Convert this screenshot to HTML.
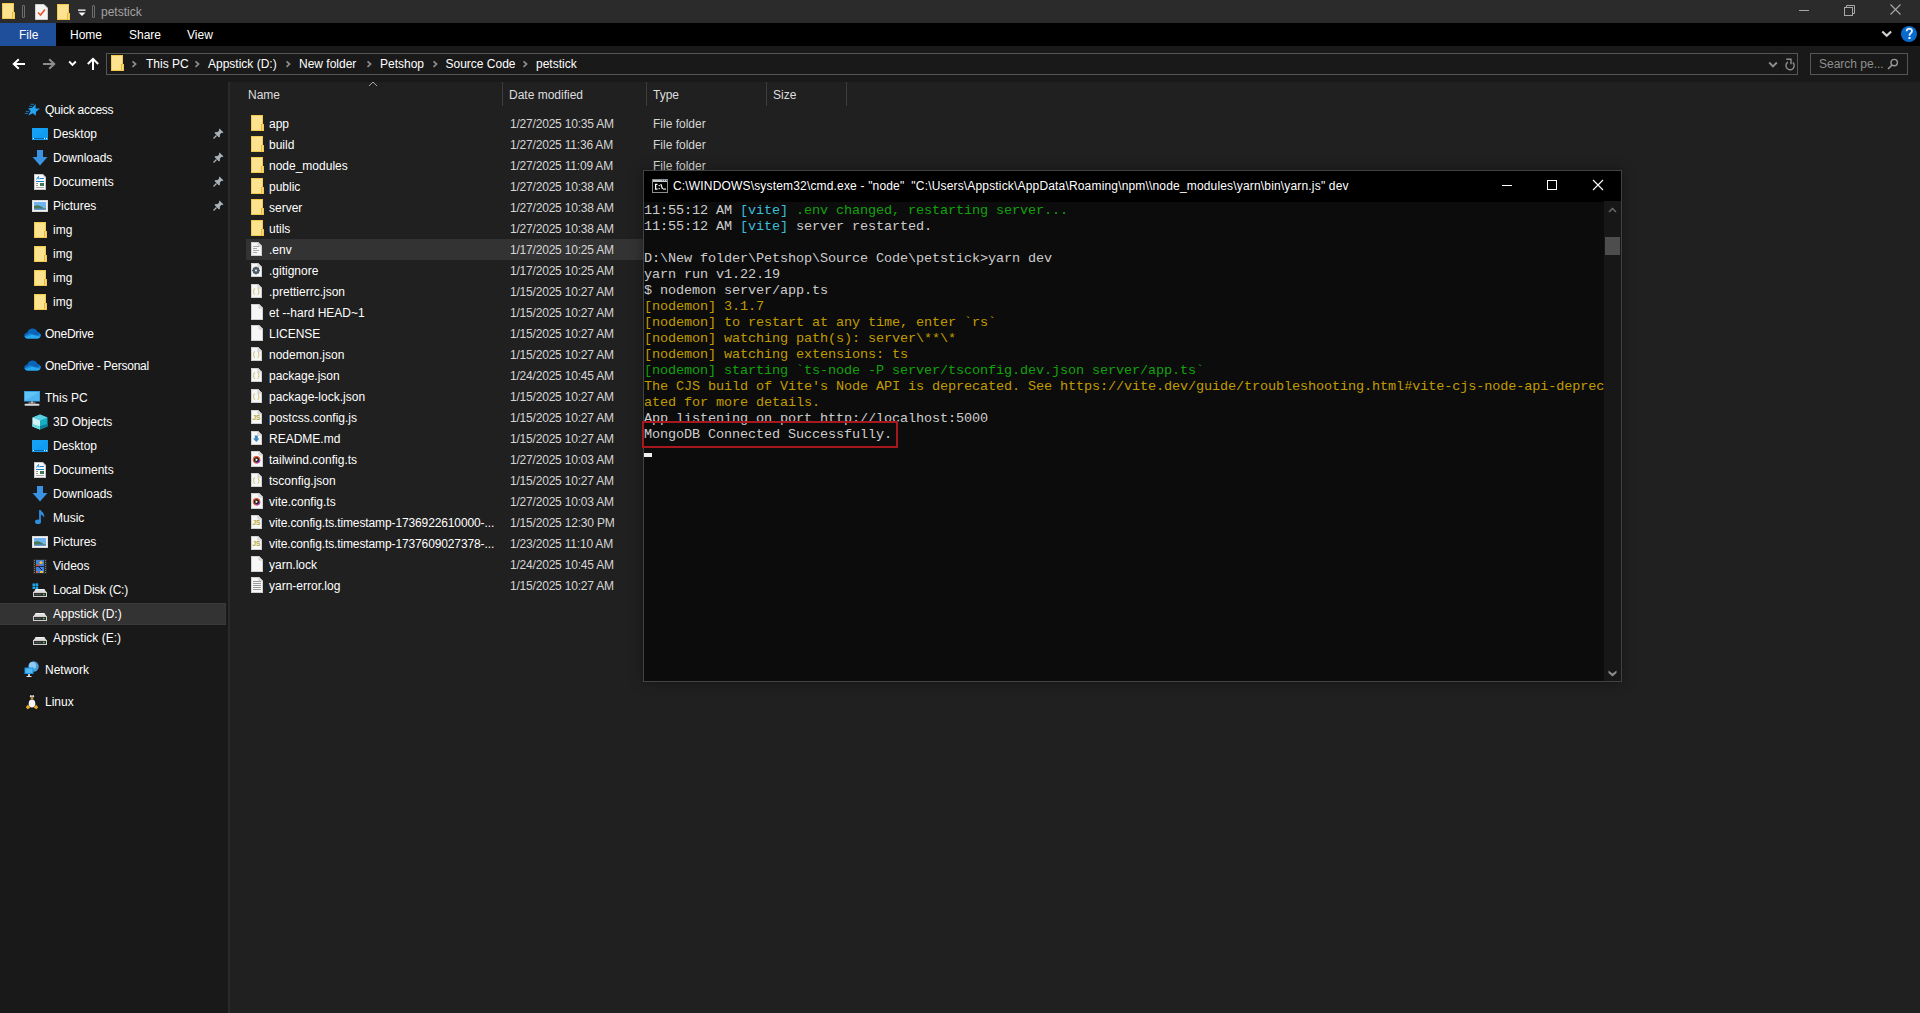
<!DOCTYPE html>
<html><head><meta charset="utf-8">
<style>
*{margin:0;padding:0;box-sizing:border-box}
html,body{width:1920px;height:1013px;overflow:hidden;background:#202020;font-family:"Liberation Sans",sans-serif;font-size:12px;color:#fff}
.a{position:absolute}
.t{position:absolute;white-space:nowrap;line-height:14px}
#title{left:0;top:0;width:1920px;height:23px;background:#2b2b2b}
#ribbon{left:0;top:23px;width:1920px;height:23px;background:#000}
#nav{left:0;top:46px;width:1920px;height:36px;background:#191919}
#side{left:0;top:82px;width:228px;height:931px;background:#191919}
#split{left:228px;top:82px;width:2px;height:931px;background:#2a2a2a}
#content{left:230px;top:82px;width:1690px;height:931px;background:#202020}
.addr{border:1px solid #555;background:#191919}
.row{position:absolute;left:246px;width:1674px;height:21px}
.nm{position:absolute;left:269px;color:#fff}
.dt{position:absolute;left:509px;color:#d4d4d4}
.ty{position:absolute;left:653px;color:#d4d4d4}
.si{position:absolute;color:#fff}
#cmd{left:643px;top:170px;width:979px;height:512px;border:1px solid #424242;background:#0c0c0c;box-shadow:0 0 12px rgba(0,0,0,.35)}
#cmdtitle{left:0;top:0;width:977px;height:31px;background:#000}
.con{position:absolute;left:0px;font-family:"Liberation Mono",monospace;font-size:13.5px;letter-spacing:-0.1px;line-height:16px;color:#cccccc;white-space:pre}
.g{color:#13a10e}.y{color:#c19c00}.c{color:#3bbfdc}.w{color:#f2f2f2}
</style></head><body>
<div id="title" class="a">
<svg class="a" style="left:2px;top:3px" width="14" height="16" viewBox="0 0 14 16"><rect x="0" y="0" width="12" height="16" fill="#f3c94c"/><rect x="1" y="1" width="10" height="14" fill="#fde290"/><rect x="10" y="9" width="3" height="7" fill="#f3c94c"/><rect x="11" y="10" width="1" height="5" fill="#fbdc7e"/><rect x="10" y="9" width="1" height="6" fill="#e3b848"/></svg>
<div class="a" style="left:22px;top:5px;width:3px;height:13px;border:1px solid #6e6e6e;border-radius:1px"></div>
<svg class="a" style="left:35px;top:4px" width="13" height="16" viewBox="0 0 13 16"><path d="M0.5 0.5H9L12.5 4V15.5H0.5Z" fill="#f4f4f4" stroke="#cfcfcf"/><path d="M3 8.5L5.5 11L10 5.5" stroke="#e8542a" stroke-width="1.6" fill="none"/></svg>
<svg class="a" style="left:57px;top:4px" width="14" height="16" viewBox="0 0 14 16"><rect x="0" y="0" width="12" height="16" fill="#f3c94c"/><rect x="1" y="1" width="10" height="14" fill="#fde290"/><rect x="10" y="9" width="3" height="7" fill="#f3c94c"/><rect x="11" y="10" width="1" height="5" fill="#fbdc7e"/><rect x="10" y="9" width="1" height="6" fill="#e3b848"/></svg>
<svg class="a" style="left:78px;top:9px" width="8" height="8" viewBox="0 0 8 8"><rect x="0" y="0.5" width="7.5" height="1.3" fill="#fff"/><path d="M0.5 3.5H7.5L4 7Z" fill="#fff"/></svg>
<div class="a" style="left:92px;top:5px;width:3px;height:13px;border:1px solid #6e6e6e;border-radius:1px"></div>
<div class="t" style="left:101px;top:5px;color:#a3a3a3;font-size:12px">petstick</div>
<div class="a" style="left:1799px;top:10px;width:10px;height:1px;background:#a8a8a8"></div>
<svg class="a" style="left:1843px;top:4px" width="13" height="13" viewBox="0 0 13 13"><rect x="1.5" y="3.5" width="8" height="8" fill="none" stroke="#a8a8a8"/><path d="M3.5 3.5V1.5H11.5V9.5H9.5" fill="none" stroke="#a8a8a8"/></svg>
<svg class="a" style="left:1889.5px;top:4px" width="11" height="11" viewBox="0 0 11 11"><path d="M0.5 0.5L10.5 10.5M10.5 0.5L0.5 10.5" stroke="#a8a8a8" stroke-width="1.1"/></svg>
</div>
<div id="ribbon" class="a">
<div class="a" style="left:0;top:0;width:56px;height:23px;background:#1f4e9b"></div>
<div class="t" style="left:19px;top:5px">File</div>
<div class="t" style="left:70px;top:5px">Home</div>
<div class="t" style="left:129px;top:5px">Share</div>
<div class="t" style="left:187px;top:5px">View</div>
<svg class="a" style="left:1881px;top:7px" width="12" height="9" viewBox="0 0 12 9"><path d="M1.3 1.5L5.7 5.8L10.1 1.5" stroke="#d2d2d2" stroke-width="2.2" fill="none"/></svg>
<svg class="a" style="left:1900px;top:2px" width="18" height="18" viewBox="0 0 18 18"><circle cx="9" cy="9" r="8" fill="#0a6bcd"/><path d="M6.6 6.2Q6.8 3.6 9.4 3.6Q12 3.7 12 6Q12 7.4 10.4 8.5Q9.5 9.2 9.5 10.8" stroke="#e8f0fa" stroke-width="1.8" fill="none"/><rect x="8.5" y="12" width="2" height="2" fill="#fff"/></svg>
</div>
<div id="nav" class="a">
<svg class="a" style="left:12px;top:12px" width="14" height="12" viewBox="0 0 14 12"><path d="M13 6H2M6.8 1.2L1.8 6L6.8 10.8" stroke="#fff" stroke-width="2" fill="none"/></svg>
<svg class="a" style="left:42px;top:12px" width="14" height="12" viewBox="0 0 14 12"><path d="M1 6H12M7.2 1.2L12.2 6L7.2 10.8" stroke="#8e8e8e" stroke-width="2" fill="none"/></svg>
<svg class="a" style="left:68px;top:14px" width="9" height="7" viewBox="0 0 9 7"><path d="M1.2 1.5L4.5 4.8L7.8 1.5" stroke="#fff" stroke-width="1.9" fill="none"/></svg>
<svg class="a" style="left:86px;top:11px" width="14" height="14" viewBox="0 0 14 14"><path d="M7 13V2M1.8 7L7 1.8L12.2 7" stroke="#fff" stroke-width="2" fill="none"/></svg>
<div class="a addr" style="left:106px;top:7px;width:1692px;height:22px"></div>
<svg class="a" style="left:111px;top:9px" width="14" height="16" viewBox="0 0 14 16"><rect x="0" y="0" width="12" height="16" fill="#f3c94c"/><rect x="1" y="1" width="10" height="14" fill="#fde290"/><rect x="10" y="9" width="3" height="7" fill="#f3c94c"/><rect x="11" y="10" width="1" height="5" fill="#fbdc7e"/><rect x="10" y="9" width="1" height="6" fill="#e3b848"/></svg>
<svg class="a" style="left:131.4px;top:14px" width="7" height="9" viewBox="0 0 7 9"><path d="M1.5 1.3L4.6 4.1L1.5 6.9" stroke="#8c8c8c" stroke-width="1.7" fill="none"/></svg>
<svg class="a" style="left:193.9px;top:14px" width="7" height="9" viewBox="0 0 7 9"><path d="M1.5 1.3L4.6 4.1L1.5 6.9" stroke="#8c8c8c" stroke-width="1.7" fill="none"/></svg>
<svg class="a" style="left:284.9px;top:14px" width="7" height="9" viewBox="0 0 7 9"><path d="M1.5 1.3L4.6 4.1L1.5 6.9" stroke="#8c8c8c" stroke-width="1.7" fill="none"/></svg>
<svg class="a" style="left:365.9px;top:14px" width="7" height="9" viewBox="0 0 7 9"><path d="M1.5 1.3L4.6 4.1L1.5 6.9" stroke="#8c8c8c" stroke-width="1.7" fill="none"/></svg>
<svg class="a" style="left:431.9px;top:14px" width="7" height="9" viewBox="0 0 7 9"><path d="M1.5 1.3L4.6 4.1L1.5 6.9" stroke="#8c8c8c" stroke-width="1.7" fill="none"/></svg>
<svg class="a" style="left:522.4px;top:14px" width="7" height="9" viewBox="0 0 7 9"><path d="M1.5 1.3L4.6 4.1L1.5 6.9" stroke="#8c8c8c" stroke-width="1.7" fill="none"/></svg>
<div class="t" style="left:146px;top:11px">This PC</div>
<div class="t" style="left:208px;top:11px">Appstick (D:)</div>
<div class="t" style="left:299px;top:11px">New folder</div>
<div class="t" style="left:380px;top:11px">Petshop</div>
<div class="t" style="left:445.5px;top:11px">Source Code</div>
<div class="t" style="left:536px;top:11px">petstick</div>
<div class="a" style="left:1780px;top:8px;width:1px;height:20px;background:#151515"></div>
<svg class="a" style="left:1768px;top:15px" width="10" height="8" viewBox="0 0 10 8"><path d="M1.2 1.5L5 5.3L8.8 1.5" stroke="#8e8e8e" stroke-width="1.9" fill="none"/></svg>
<svg class="a" style="left:1784px;top:11px" width="13" height="15" viewBox="0 0 13 15"><path d="M8.8 5.6A4.1 4.1 0 1 1 3.9 5.2" stroke="#8e8e8e" stroke-width="1.4" fill="none"/><path d="M2.3 2.3H7V7.2" stroke="#8e8e8e" stroke-width="1.4" fill="none"/></svg>
<div class="a addr" style="left:1810px;top:7px;width:98px;height:22px"></div>
<div class="t" style="left:1819px;top:11px;color:#8f8f8f">Search pe...</div>
<svg class="a" style="left:1887px;top:12px" width="12" height="12" viewBox="0 0 12 12"><circle cx="7.2" cy="4.6" r="3.2" stroke="#9a9a9a" stroke-width="1.4" fill="none"/><path d="M5 7L1 11" stroke="#9a9a9a" stroke-width="1.6"/></svg>
</div>
<div id="side" class="a">
<div class="a" style="left:0px;top:521px;width:226px;height:22px;background:#333;border:1px solid #393939;border-left:0"></div>
<svg class="a" style="left:20px;top:18px" width="24" height="20" viewBox="0 0 24 20"><path d="M15.60 3.90L15.56 8.42L19.90 8.50L16.11 11.72L15.60 15.80L12.90 13.30L8.30 15.60L10.67 11.08L8.10 8.50L12.22 7.86Z" fill="#20a4f3"/><path d="M11 4.3H13.6M9.5 6.4H12M6.2 11.4H8.6M5.2 13.4H7.6" stroke="#1677b8" stroke-width="1" stroke-linecap="round"/></svg>
<div class="t" style="left:45px;top:21px;letter-spacing:-0.25px">Quick access</div>
<svg class="a" style="left:32px;top:46px" width="16" height="12" viewBox="0 0 16 12"><rect x="0" y="0" width="16" height="12" fill="#14a0f5"/><path d="M0 12L16 0V10H0Z" fill="#0d97ec" opacity="0.5"/><rect x="1" y="10" width="14" height="1" fill="#0a64b0"/><rect x="1" y="10" width="1" height="1" fill="#fff"/><rect x="12" y="10" width="1" height="1" fill="#fff"/><rect x="14" y="10" width="1" height="1" fill="#fff"/></svg>
<div class="t" style="left:53px;top:45px">Desktop</div>
<svg class="a" style="left:32px;top:68px" width="16" height="16" viewBox="0 0 16 16"><path d="M5 0H11V7H15.5L8 15.5L0.5 7H5Z" fill="#3a93e3"/></svg>
<div class="t" style="left:53px;top:69px">Downloads</div>
<svg class="a" style="left:34px;top:92px" width="12" height="16" viewBox="0 0 12 16"><path d="M0 0H9L12 3V16H0Z" fill="#c8c8c8"/><path d="M1 1H8.5L11 3.5V15H1Z" fill="#fafafa"/><rect x="2" y="7" width="8" height="1" fill="#1683d8"/><path d="M2.5 5.5L4.5 2.5L5 5.5" stroke="#1683d8" stroke-width="1" fill="none"/><rect x="6" y="4" width="4" height="1" fill="#1683d8"/><rect x="2" y="9" width="2" height="1" fill="#999"/><rect x="2" y="11" width="2" height="1" fill="#999"/><rect x="6" y="9" width="4" height="3" fill="#3d7a4f"/><rect x="2" y="13" width="8" height="1" fill="#aaa"/></svg>
<div class="t" style="left:53px;top:93px">Documents</div>
<svg class="a" style="left:32px;top:118px" width="16" height="12" viewBox="0 0 16 12"><rect x="0" y="0" width="16" height="12" fill="#d9d9d9"/><rect x="1" y="1" width="14" height="10" fill="#f4f4f4"/><rect x="2" y="2" width="12" height="8" fill="#6fb4f0"/><path d="M2 6Q6 4 10 7T14 7V10H2Z" fill="#477a55"/><rect x="2" y="8.5" width="12" height="1.5" fill="#5f95c9"/></svg>
<div class="t" style="left:53px;top:117px">Pictures</div>
<svg class="a" style="left:34px;top:140px" width="14" height="16" viewBox="0 0 14 16"><rect x="0" y="0" width="12" height="16" fill="#f3c94c"/><rect x="1" y="1" width="10" height="14" fill="#fde290"/><rect x="10" y="9" width="3" height="7" fill="#f3c94c"/><rect x="11" y="10" width="1" height="5" fill="#fbdc7e"/><rect x="10" y="9" width="1" height="6" fill="#e3b848"/></svg>
<div class="t" style="left:53px;top:141px">img</div>
<svg class="a" style="left:34px;top:164px" width="14" height="16" viewBox="0 0 14 16"><rect x="0" y="0" width="12" height="16" fill="#f3c94c"/><rect x="1" y="1" width="10" height="14" fill="#fde290"/><rect x="10" y="9" width="3" height="7" fill="#f3c94c"/><rect x="11" y="10" width="1" height="5" fill="#fbdc7e"/><rect x="10" y="9" width="1" height="6" fill="#e3b848"/></svg>
<div class="t" style="left:53px;top:165px">img</div>
<svg class="a" style="left:34px;top:188px" width="14" height="16" viewBox="0 0 14 16"><rect x="0" y="0" width="12" height="16" fill="#f3c94c"/><rect x="1" y="1" width="10" height="14" fill="#fde290"/><rect x="10" y="9" width="3" height="7" fill="#f3c94c"/><rect x="11" y="10" width="1" height="5" fill="#fbdc7e"/><rect x="10" y="9" width="1" height="6" fill="#e3b848"/></svg>
<div class="t" style="left:53px;top:189px">img</div>
<svg class="a" style="left:34px;top:212px" width="14" height="16" viewBox="0 0 14 16"><rect x="0" y="0" width="12" height="16" fill="#f3c94c"/><rect x="1" y="1" width="10" height="14" fill="#fde290"/><rect x="10" y="9" width="3" height="7" fill="#f3c94c"/><rect x="11" y="10" width="1" height="5" fill="#fbdc7e"/><rect x="10" y="9" width="1" height="6" fill="#e3b848"/></svg>
<div class="t" style="left:53px;top:213px">img</div>
<svg class="a" style="left:23.5px;top:246px" width="17" height="11" viewBox="0 0 17 11"><defs><clipPath id="cl1"><path d="M4 10.5C1.9 10.5 0.3 9.2 0.3 7.4C0.3 5.7 1.6 4.5 3.4 4.4C4.1 2.1 6.2 0.5 8.7 0.5C11 0.5 12.9 1.9 13.6 3.9C15.5 4.1 16.7 5.5 16.7 7.3C16.7 9.2 15.2 10.5 13.3 10.5Z"/></clipPath></defs><g clip-path="url(#cl1)"><rect x="0" y="0" width="17" height="11" fill="#0a64b8"/><path d="M0 8.5L6 5.2L12 8L17 5.5V11H0Z" fill="#1688dc"/><path d="M0 11L0 9.5L8.5 6.5L17 9V11Z" fill="#28a8ea"/></g></svg>
<div class="t" style="left:45px;top:245px;letter-spacing:-0.25px">OneDrive</div>
<svg class="a" style="left:23.5px;top:278px" width="17" height="11" viewBox="0 0 17 11"><defs><clipPath id="cl2"><path d="M4 10.5C1.9 10.5 0.3 9.2 0.3 7.4C0.3 5.7 1.6 4.5 3.4 4.4C4.1 2.1 6.2 0.5 8.7 0.5C11 0.5 12.9 1.9 13.6 3.9C15.5 4.1 16.7 5.5 16.7 7.3C16.7 9.2 15.2 10.5 13.3 10.5Z"/></clipPath></defs><g clip-path="url(#cl2)"><rect x="0" y="0" width="17" height="11" fill="#0a64b8"/><path d="M0 8.5L6 5.2L12 8L17 5.5V11H0Z" fill="#1688dc"/><path d="M0 11L0 9.5L8.5 6.5L17 9V11Z" fill="#28a8ea"/></g></svg>
<div class="t" style="left:45px;top:277px;letter-spacing:-0.25px">OneDrive - Personal</div>
<svg class="a" style="left:24px;top:309px" width="17" height="15" viewBox="0 0 17 15"><rect x="0" y="0" width="16" height="10.5" fill="#3aa0e6"/><rect x="1" y="1" width="14" height="8.5" fill="#62c3f6"/><path d="M1 9.5L15 1V9.5Z" fill="#4fb6f2"/><rect x="7" y="10.5" width="2" height="1.5" fill="#cfcfcf"/><rect x="4.5" y="11.5" width="7" height="1" fill="#bdbdbd"/><rect x="0.5" y="12.8" width="15" height="2" rx="1" fill="#d9d9d9"/></svg>
<div class="t" style="left:45px;top:309px">This PC</div>
<svg class="a" style="left:32px;top:332px" width="16" height="16" viewBox="0 0 16 16"><path d="M8 0.5L15.5 3.5V12.5L8 15.5L0.5 12.5V3.5Z" fill="#18adc6"/><path d="M8 0.5L15.5 3.5L8 6.5L0.5 3.5Z" fill="#5ccfe0"/><path d="M0.5 3.5L8 6.5V15.5L0.5 12.5Z" fill="#d4f2f5"/><path d="M0.5 10L8 12V15.5L0.5 12.5Z" fill="#6ad6e2"/><path d="M8 12L15.5 10V12.5L8 15.5Z" fill="#0b7f98"/></svg>
<div class="t" style="left:53px;top:333px">3D Objects</div>
<svg class="a" style="left:32px;top:358px" width="16" height="12" viewBox="0 0 16 12"><rect x="0" y="0" width="16" height="12" fill="#14a0f5"/><path d="M0 12L16 0V10H0Z" fill="#0d97ec" opacity="0.5"/><rect x="1" y="10" width="14" height="1" fill="#0a64b0"/><rect x="1" y="10" width="1" height="1" fill="#fff"/><rect x="12" y="10" width="1" height="1" fill="#fff"/><rect x="14" y="10" width="1" height="1" fill="#fff"/></svg>
<div class="t" style="left:53px;top:357px">Desktop</div>
<svg class="a" style="left:34px;top:380px" width="12" height="16" viewBox="0 0 12 16"><path d="M0 0H9L12 3V16H0Z" fill="#c8c8c8"/><path d="M1 1H8.5L11 3.5V15H1Z" fill="#fafafa"/><rect x="2" y="7" width="8" height="1" fill="#1683d8"/><path d="M2.5 5.5L4.5 2.5L5 5.5" stroke="#1683d8" stroke-width="1" fill="none"/><rect x="6" y="4" width="4" height="1" fill="#1683d8"/><rect x="2" y="9" width="2" height="1" fill="#999"/><rect x="2" y="11" width="2" height="1" fill="#999"/><rect x="6" y="9" width="4" height="3" fill="#3d7a4f"/><rect x="2" y="13" width="8" height="1" fill="#aaa"/></svg>
<div class="t" style="left:53px;top:381px">Documents</div>
<svg class="a" style="left:32px;top:404px" width="16" height="16" viewBox="0 0 16 16"><path d="M5 0H11V7H15.5L8 15.5L0.5 7H5Z" fill="#3a93e3"/></svg>
<div class="t" style="left:53px;top:405px">Downloads</div>
<svg class="a" style="left:34px;top:427px" width="12" height="16" viewBox="0 0 12 16"><path d="M6 1V12" stroke="#2d8fe0" stroke-width="1.8"/><ellipse cx="4" cy="12.8" rx="3" ry="2.3" fill="#2d8fe0"/><path d="M6.5 1.5Q11 4 10 9Q9.5 6 6.5 5.5Z" fill="#2d8fe0"/></svg>
<div class="t" style="left:53px;top:429px">Music</div>
<svg class="a" style="left:32px;top:454px" width="16" height="12" viewBox="0 0 16 12"><rect x="0" y="0" width="16" height="12" fill="#d9d9d9"/><rect x="1" y="1" width="14" height="10" fill="#f4f4f4"/><rect x="2" y="2" width="12" height="8" fill="#6fb4f0"/><path d="M2 6Q6 4 10 7T14 7V10H2Z" fill="#477a55"/><rect x="2" y="8.5" width="12" height="1.5" fill="#5f95c9"/></svg>
<div class="t" style="left:53px;top:453px">Pictures</div>
<svg class="a" style="left:33px;top:477px" width="14" height="15" viewBox="0 0 14 15"><rect x="0" y="0" width="14" height="15" fill="#2a2a2a"/><rect x="1" y="1" width="1" height="1" fill="#777"/><rect x="12" y="1" width="1" height="1" fill="#777"/><rect x="1" y="3" width="1" height="1" fill="#777"/><rect x="12" y="3" width="1" height="1" fill="#777"/><rect x="1" y="5" width="1" height="1" fill="#777"/><rect x="12" y="5" width="1" height="1" fill="#777"/><rect x="1" y="7" width="1" height="1" fill="#777"/><rect x="12" y="7" width="1" height="1" fill="#777"/><rect x="1" y="9" width="1" height="1" fill="#777"/><rect x="12" y="9" width="1" height="1" fill="#777"/><rect x="1" y="11" width="1" height="1" fill="#777"/><rect x="12" y="11" width="1" height="1" fill="#777"/><rect x="1" y="13" width="1" height="1" fill="#777"/><rect x="12" y="13" width="1" height="1" fill="#777"/><rect x="3" y="1" width="8" height="6" fill="#3f7fe0"/><rect x="3" y="8" width="8" height="6" fill="#3f7fe0"/><circle cx="8" cy="3.5" r="1.6" fill="#f0c020"/><rect x="3" y="5" width="3" height="2" fill="#e04a30"/><rect x="4" y="5" width="1" height="1" fill="#30b040"/><path d="M6 8L9 11" stroke="#222" stroke-width="1"/><rect x="7" y="12" width="3" height="2" fill="#f0c020"/><rect x="3" y="12" width="2" height="2" fill="#e05a40"/></svg>
<div class="t" style="left:53px;top:477px">Videos</div>
<svg class="a" style="left:32px;top:501px" width="7" height="7" viewBox="0 0 7 7"><rect x="0.5" y="0.5" width="2.5" height="2.5" fill="#1aa7ec"/><rect x="3.5" y="0.3" width="2.7" height="2.7" fill="#1aa7ec"/><rect x="0.5" y="3.5" width="2.5" height="2.5" fill="#1aa7ec"/><rect x="3.5" y="3.5" width="2.7" height="2.7" fill="#1aa7ec"/></svg><svg class="a" style="left:33px;top:506px" width="15" height="10" viewBox="0 0 15 10"><path d="M2.8 1H11.2L13.8 4.5H0.2Z" fill="#dcdcdc"/><path d="M3 1H11L12 2.3H2Z" fill="#f2f2f2"/><rect x="0.5" y="4.5" width="13" height="4" fill="#2e2e2e" stroke="#cfcfcf"/><rect x="2" y="6.2" width="6" height="0.8" fill="#555"/><rect x="10" y="5.8" width="1.5" height="1.5" fill="#38d046"/></svg>
<div class="t" style="left:53px;top:501px;letter-spacing:-0.25px">Local Disk (C:)</div>
<svg class="a" style="left:33px;top:530px" width="15" height="10" viewBox="0 0 15 10"><path d="M2.8 1H11.2L13.8 4.5H0.2Z" fill="#dcdcdc"/><path d="M3 1H11L12 2.3H2Z" fill="#f2f2f2"/><rect x="0.5" y="4.5" width="13" height="4" fill="#2e2e2e" stroke="#cfcfcf"/><rect x="2" y="6.2" width="6" height="0.8" fill="#555"/><rect x="10" y="5.8" width="1.5" height="1.5" fill="#38d046"/></svg>
<div class="t" style="left:53px;top:525px">Appstick (D:)</div>
<svg class="a" style="left:33px;top:554px" width="15" height="10" viewBox="0 0 15 10"><path d="M2.8 1H11.2L13.8 4.5H0.2Z" fill="#dcdcdc"/><path d="M3 1H11L12 2.3H2Z" fill="#f2f2f2"/><rect x="0.5" y="4.5" width="13" height="4" fill="#2e2e2e" stroke="#cfcfcf"/><rect x="2" y="6.2" width="6" height="0.8" fill="#555"/><rect x="10" y="5.8" width="1.5" height="1.5" fill="#38d046"/></svg>
<div class="t" style="left:53px;top:549px">Appstick (E:)</div>
<svg class="a" style="left:24px;top:579px" width="17" height="17" viewBox="0 0 17 17"><circle cx="9.5" cy="5.5" r="5.2" fill="#4a9fd8"/><circle cx="8.5" cy="4.5" r="3.5" fill="#8ecaf2"/><rect x="0.5" y="6.5" width="9" height="6.5" fill="#1593e6"/><rect x="1.5" y="7.5" width="7" height="4.5" fill="#4fb8f5"/><rect x="4" y="13" width="2" height="2" fill="#ccc"/><rect x="2.5" y="15" width="5" height="1" fill="#ddd"/></svg>
<div class="t" style="left:45px;top:581px">Network</div>
<svg class="a" style="left:25px;top:611px" width="14" height="17" viewBox="0 0 14 17"><path d="M7 0.5C5 0.5 4.2 2 4.2 4C4.2 5.5 3.5 6.5 2.8 8C2 9.8 2 12 3 14H11C12 12 12 9.8 11.2 8C10.5 6.5 9.8 5.5 9.8 4C9.8 2 9 0.5 7 0.5Z" fill="#151515"/><ellipse cx="7" cy="10.5" rx="3.3" ry="4" fill="#f5f5f5"/><ellipse cx="5.9" cy="3.3" rx="1" ry="1.2" fill="#d8d8d8"/><ellipse cx="8.1" cy="3.3" rx="1" ry="1.2" fill="#d8d8d8"/><path d="M5.2 5L7 4.3L8.8 5L7 6.4Z" fill="#e9a81a"/><path d="M0.8 14.2L3 11.5L5.2 14.8L2.5 16.2Z" fill="#e9ab1c"/><path d="M13.2 14.2L11 11.5L8.8 14.8L11.5 16.2Z" fill="#e9ab1c"/></svg>
<div class="t" style="left:45px;top:613px">Linux</div>
<svg class="a" style="left:213px;top:46px" width="11" height="11" viewBox="0 0 11 11"><path d="M6.5 0.5L10.5 4.5L9.5 5L8.5 4.8L6.8 6.8L7 8.5L6 9.5L1.5 5L2.5 4L4.2 4.2L6.2 2.5L6 1.5Z" fill="#a9b3bb"/><path d="M3.5 7.5L0.5 10.5" stroke="#a9b3bb" stroke-width="1.2"/></svg>
<svg class="a" style="left:213px;top:70px" width="11" height="11" viewBox="0 0 11 11"><path d="M6.5 0.5L10.5 4.5L9.5 5L8.5 4.8L6.8 6.8L7 8.5L6 9.5L1.5 5L2.5 4L4.2 4.2L6.2 2.5L6 1.5Z" fill="#a9b3bb"/><path d="M3.5 7.5L0.5 10.5" stroke="#a9b3bb" stroke-width="1.2"/></svg>
<svg class="a" style="left:213px;top:94px" width="11" height="11" viewBox="0 0 11 11"><path d="M6.5 0.5L10.5 4.5L9.5 5L8.5 4.8L6.8 6.8L7 8.5L6 9.5L1.5 5L2.5 4L4.2 4.2L6.2 2.5L6 1.5Z" fill="#a9b3bb"/><path d="M3.5 7.5L0.5 10.5" stroke="#a9b3bb" stroke-width="1.2"/></svg>
<svg class="a" style="left:213px;top:118px" width="11" height="11" viewBox="0 0 11 11"><path d="M6.5 0.5L10.5 4.5L9.5 5L8.5 4.8L6.8 6.8L7 8.5L6 9.5L1.5 5L2.5 4L4.2 4.2L6.2 2.5L6 1.5Z" fill="#a9b3bb"/><path d="M3.5 7.5L0.5 10.5" stroke="#a9b3bb" stroke-width="1.2"/></svg>
</div>
<div id="split" class="a"></div>
<div id="content" class="a"></div>
<div class="a" style="left:246px;top:239px;width:1000px;height:21px;background:#333"></div>
<div class="a" style="left:502px;top:82px;width:1px;height:24px;background:#3d3d3d"></div>
<div class="a" style="left:646px;top:82px;width:1px;height:24px;background:#3d3d3d"></div>
<div class="a" style="left:766px;top:82px;width:1px;height:24px;background:#3d3d3d"></div>
<div class="a" style="left:846px;top:82px;width:1px;height:24px;background:#3d3d3d"></div>
<svg class="a" style="left:368px;top:81px" width="10" height="6" viewBox="0 0 10 6"><path d="M1 5L5 1L9 5" stroke="#a8a8a8" stroke-width="1" fill="none"/></svg>
<div class="t" style="left:248px;top:88px;color:#dedede">Name</div>
<div class="t" style="left:509px;top:88px;color:#dedede">Date modified</div>
<div class="t" style="left:653px;top:88px;color:#dedede">Type</div>
<div class="t" style="left:773px;top:88px;color:#dedede">Size</div>
<svg class="a" style="left:251px;top:115px" width="14" height="16" viewBox="0 0 14 16"><rect x="0" y="0" width="12" height="16" fill="#f3c94c"/><rect x="1" y="1" width="10" height="14" fill="#fde290"/><rect x="10" y="9" width="3" height="7" fill="#f3c94c"/><rect x="11" y="10" width="1" height="5" fill="#fbdc7e"/><rect x="10" y="9" width="1" height="6" fill="#e3b848"/></svg>
<div class="t" style="left:269px;top:117px">app</div>
<div class="t" style="left:510px;top:117px;color:#d6d6d6;letter-spacing:-0.2px">1/27/2025 10:35 AM</div>
<div class="t" style="left:653px;top:117px;color:#d6d6d6">File folder</div>
<svg class="a" style="left:251px;top:136px" width="14" height="16" viewBox="0 0 14 16"><rect x="0" y="0" width="12" height="16" fill="#f3c94c"/><rect x="1" y="1" width="10" height="14" fill="#fde290"/><rect x="10" y="9" width="3" height="7" fill="#f3c94c"/><rect x="11" y="10" width="1" height="5" fill="#fbdc7e"/><rect x="10" y="9" width="1" height="6" fill="#e3b848"/></svg>
<div class="t" style="left:269px;top:138px">build</div>
<div class="t" style="left:510px;top:138px;color:#d6d6d6;letter-spacing:-0.2px">1/27/2025 11:36 AM</div>
<div class="t" style="left:653px;top:138px;color:#d6d6d6">File folder</div>
<svg class="a" style="left:251px;top:157px" width="14" height="16" viewBox="0 0 14 16"><rect x="0" y="0" width="12" height="16" fill="#f3c94c"/><rect x="1" y="1" width="10" height="14" fill="#fde290"/><rect x="10" y="9" width="3" height="7" fill="#f3c94c"/><rect x="11" y="10" width="1" height="5" fill="#fbdc7e"/><rect x="10" y="9" width="1" height="6" fill="#e3b848"/></svg>
<div class="t" style="left:269px;top:159px">node_modules</div>
<div class="t" style="left:510px;top:159px;color:#d6d6d6;letter-spacing:-0.2px">1/27/2025 11:09 AM</div>
<div class="t" style="left:653px;top:159px;color:#d6d6d6">File folder</div>
<svg class="a" style="left:251px;top:178px" width="14" height="16" viewBox="0 0 14 16"><rect x="0" y="0" width="12" height="16" fill="#f3c94c"/><rect x="1" y="1" width="10" height="14" fill="#fde290"/><rect x="10" y="9" width="3" height="7" fill="#f3c94c"/><rect x="11" y="10" width="1" height="5" fill="#fbdc7e"/><rect x="10" y="9" width="1" height="6" fill="#e3b848"/></svg>
<div class="t" style="left:269px;top:180px">public</div>
<div class="t" style="left:510px;top:180px;color:#d6d6d6;letter-spacing:-0.2px">1/27/2025 10:38 AM</div>
<div class="t" style="left:653px;top:180px;color:#d6d6d6">File folder</div>
<svg class="a" style="left:251px;top:199px" width="14" height="16" viewBox="0 0 14 16"><rect x="0" y="0" width="12" height="16" fill="#f3c94c"/><rect x="1" y="1" width="10" height="14" fill="#fde290"/><rect x="10" y="9" width="3" height="7" fill="#f3c94c"/><rect x="11" y="10" width="1" height="5" fill="#fbdc7e"/><rect x="10" y="9" width="1" height="6" fill="#e3b848"/></svg>
<div class="t" style="left:269px;top:201px">server</div>
<div class="t" style="left:510px;top:201px;color:#d6d6d6;letter-spacing:-0.2px">1/27/2025 10:38 AM</div>
<div class="t" style="left:653px;top:201px;color:#d6d6d6">File folder</div>
<svg class="a" style="left:251px;top:220px" width="14" height="16" viewBox="0 0 14 16"><rect x="0" y="0" width="12" height="16" fill="#f3c94c"/><rect x="1" y="1" width="10" height="14" fill="#fde290"/><rect x="10" y="9" width="3" height="7" fill="#f3c94c"/><rect x="11" y="10" width="1" height="5" fill="#fbdc7e"/><rect x="10" y="9" width="1" height="6" fill="#e3b848"/></svg>
<div class="t" style="left:269px;top:222px">utils</div>
<div class="t" style="left:510px;top:222px;color:#d6d6d6;letter-spacing:-0.2px">1/27/2025 10:38 AM</div>
<div class="t" style="left:653px;top:222px;color:#d6d6d6">File folder</div>
<svg class="a" style="left:251px;top:242px" width="11" height="14" viewBox="0 0 11 14"><path d="M0 0H7L11 4V14H0Z" fill="#d0d0d0"/><path d="M1 1H6.5L10 4.5V13H1Z" fill="#f7f7f7"/><path d="M7 0V4H11" fill="#e4e4e4" stroke="#c8c8c8" stroke-width="0.8"/><rect x="2" y="4" width="6" height="1" fill="#aaa"/><rect x="2" y="6" width="4" height="1" fill="#aaa"/><rect x="2" y="8" width="6" height="1" fill="#aaa"/><rect x="2" y="10" width="4" height="1" fill="#aaa"/></svg>
<div class="t" style="left:269px;top:243px">.env</div>
<div class="t" style="left:510px;top:243px;color:#d6d6d6;letter-spacing:-0.2px">1/17/2025 10:25 AM</div>
<svg class="a" style="left:251px;top:263px" width="11" height="14" viewBox="0 0 11 14"><path d="M0 0H7L11 4V14H0Z" fill="#d0d0d0"/><path d="M1 1H6.5L10 4.5V13H1Z" fill="#f7f7f7"/><path d="M7 0V4H11" fill="#e4e4e4" stroke="#c8c8c8" stroke-width="0.8"/><circle cx="5" cy="7.5" r="2.6" fill="none" stroke="#4a5a66" stroke-width="1.8"/><path d="M5 3.6V11.4M1.1 7.5H8.9M2.3 4.8L7.7 10.2M7.7 4.8L2.3 10.2" stroke="#4a5a66" stroke-width="1.2"/><circle cx="5" cy="7.5" r="1" fill="#f7f7f7"/></svg>
<div class="t" style="left:269px;top:264px">.gitignore</div>
<div class="t" style="left:510px;top:264px;color:#d6d6d6;letter-spacing:-0.2px">1/17/2025 10:25 AM</div>
<svg class="a" style="left:251px;top:284px" width="11" height="14" viewBox="0 0 11 14"><path d="M0 0H7L11 4V14H0Z" fill="#d0d0d0"/><path d="M1 1H6.5L10 4.5V13H1Z" fill="#f7f7f7"/><path d="M7 0V4H11" fill="#e4e4e4" stroke="#c8c8c8" stroke-width="0.8"/><path d="M4 4.5Q2.8 4.5 2.8 6V7.2L2.2 7.6L2.8 8V9.4Q2.8 10.6 4 10.6M6.5 4.5Q7.7 4.5 7.7 6V7.2L8.3 7.6L7.7 8V9.4Q7.7 10.6 6.5 10.6" fill="none" stroke="#c9c06a" stroke-width="0.9"/></svg>
<div class="t" style="left:269px;top:285px">.prettierrc.json</div>
<div class="t" style="left:510px;top:285px;color:#d6d6d6;letter-spacing:-0.2px">1/15/2025 10:27 AM</div>
<svg class="a" style="left:251px;top:304px" width="12" height="16" viewBox="0 0 12 16"><path d="M0 0H8L12 4V16H0Z" fill="#d0d0d0"/><path d="M1 1H7.5L11 4.5V15H1Z" fill="#f7f7f7"/><path d="M8 0V4H12" fill="#e4e4e4" stroke="#c8c8c8" stroke-width="0.8"/></svg>
<div class="t" style="left:269px;top:306px">et --hard HEAD~1</div>
<div class="t" style="left:510px;top:306px;color:#d6d6d6;letter-spacing:-0.2px">1/15/2025 10:27 AM</div>
<svg class="a" style="left:251px;top:325px" width="12" height="16" viewBox="0 0 12 16"><path d="M0 0H8L12 4V16H0Z" fill="#d0d0d0"/><path d="M1 1H7.5L11 4.5V15H1Z" fill="#f7f7f7"/><path d="M8 0V4H12" fill="#e4e4e4" stroke="#c8c8c8" stroke-width="0.8"/></svg>
<div class="t" style="left:269px;top:327px">LICENSE</div>
<div class="t" style="left:510px;top:327px;color:#d6d6d6;letter-spacing:-0.2px">1/15/2025 10:27 AM</div>
<svg class="a" style="left:251px;top:347px" width="11" height="14" viewBox="0 0 11 14"><path d="M0 0H7L11 4V14H0Z" fill="#d0d0d0"/><path d="M1 1H6.5L10 4.5V13H1Z" fill="#f7f7f7"/><path d="M7 0V4H11" fill="#e4e4e4" stroke="#c8c8c8" stroke-width="0.8"/><path d="M4 4.5Q2.8 4.5 2.8 6V7.2L2.2 7.6L2.8 8V9.4Q2.8 10.6 4 10.6M6.5 4.5Q7.7 4.5 7.7 6V7.2L8.3 7.6L7.7 8V9.4Q7.7 10.6 6.5 10.6" fill="none" stroke="#c9c06a" stroke-width="0.9"/></svg>
<div class="t" style="left:269px;top:348px">nodemon.json</div>
<div class="t" style="left:510px;top:348px;color:#d6d6d6;letter-spacing:-0.2px">1/15/2025 10:27 AM</div>
<svg class="a" style="left:251px;top:368px" width="11" height="14" viewBox="0 0 11 14"><path d="M0 0H7L11 4V14H0Z" fill="#d0d0d0"/><path d="M1 1H6.5L10 4.5V13H1Z" fill="#f7f7f7"/><path d="M7 0V4H11" fill="#e4e4e4" stroke="#c8c8c8" stroke-width="0.8"/><path d="M4 4.5Q2.8 4.5 2.8 6V7.2L2.2 7.6L2.8 8V9.4Q2.8 10.6 4 10.6M6.5 4.5Q7.7 4.5 7.7 6V7.2L8.3 7.6L7.7 8V9.4Q7.7 10.6 6.5 10.6" fill="none" stroke="#c9c06a" stroke-width="0.9"/></svg>
<div class="t" style="left:269px;top:369px">package.json</div>
<div class="t" style="left:510px;top:369px;color:#d6d6d6;letter-spacing:-0.2px">1/24/2025 10:45 AM</div>
<svg class="a" style="left:251px;top:389px" width="11" height="14" viewBox="0 0 11 14"><path d="M0 0H7L11 4V14H0Z" fill="#d0d0d0"/><path d="M1 1H6.5L10 4.5V13H1Z" fill="#f7f7f7"/><path d="M7 0V4H11" fill="#e4e4e4" stroke="#c8c8c8" stroke-width="0.8"/><path d="M4 4.5Q2.8 4.5 2.8 6V7.2L2.2 7.6L2.8 8V9.4Q2.8 10.6 4 10.6M6.5 4.5Q7.7 4.5 7.7 6V7.2L8.3 7.6L7.7 8V9.4Q7.7 10.6 6.5 10.6" fill="none" stroke="#c9c06a" stroke-width="0.9"/></svg>
<div class="t" style="left:269px;top:390px">package-lock.json</div>
<div class="t" style="left:510px;top:390px;color:#d6d6d6;letter-spacing:-0.2px">1/15/2025 10:27 AM</div>
<svg class="a" style="left:251px;top:410px" width="11" height="14" viewBox="0 0 11 14"><path d="M0 0H7L11 4V14H0Z" fill="#d0d0d0"/><path d="M1 1H6.5L10 4.5V13H1Z" fill="#f7f7f7"/><path d="M7 0V4H11" fill="#e4e4e4" stroke="#c8c8c8" stroke-width="0.8"/><text x="5.3" y="10.3" font-family="Liberation Sans" font-weight="bold" font-size="6.5" fill="#b3aa3c" text-anchor="middle" letter-spacing="-0.3">JS</text></svg>
<div class="t" style="left:269px;top:411px">postcss.config.js</div>
<div class="t" style="left:510px;top:411px;color:#d6d6d6;letter-spacing:-0.2px">1/15/2025 10:27 AM</div>
<svg class="a" style="left:251px;top:431px" width="11" height="14" viewBox="0 0 11 14"><path d="M0 0H7L11 4V14H0Z" fill="#d0d0d0"/><path d="M1 1H6.5L10 4.5V13H1Z" fill="#f7f7f7"/><path d="M7 0V4H11" fill="#e4e4e4" stroke="#c8c8c8" stroke-width="0.8"/><path d="M3.8 4.5H6.8V7.5H8.5L5.3 11L2 7.5H3.8Z" fill="#3d88c0"/></svg>
<div class="t" style="left:269px;top:432px">README.md</div>
<div class="t" style="left:510px;top:432px;color:#d6d6d6;letter-spacing:-0.2px">1/15/2025 10:27 AM</div>
<svg class="a" style="left:251px;top:451px" width="12" height="16" viewBox="0 0 12 16"><path d="M0 0H8L12 4V16H0Z" fill="#d0d0d0"/><path d="M1 1H7.5L11 4.5V15H1Z" fill="#f7f7f7"/><path d="M8 0V4H12" fill="#e4e4e4" stroke="#c8c8c8" stroke-width="0.8"/><circle cx="5.5" cy="8.8" r="3.2" fill="#1e1e1e" stroke="#e5603a" stroke-width="1.2"/><path d="M8.7 8.8A3.2 3.2 0 0 1 5.5 12" stroke="#9b3ccf" stroke-width="1.2" fill="none"/><path d="M4.6 7.2L7 8.8L4.6 10.4Z" fill="#fff"/></svg>
<div class="t" style="left:269px;top:453px">tailwind.config.ts</div>
<div class="t" style="left:510px;top:453px;color:#d6d6d6;letter-spacing:-0.2px">1/27/2025 10:03 AM</div>
<svg class="a" style="left:251px;top:473px" width="11" height="14" viewBox="0 0 11 14"><path d="M0 0H7L11 4V14H0Z" fill="#d0d0d0"/><path d="M1 1H6.5L10 4.5V13H1Z" fill="#f7f7f7"/><path d="M7 0V4H11" fill="#e4e4e4" stroke="#c8c8c8" stroke-width="0.8"/><path d="M4 4.5Q2.8 4.5 2.8 6V7.2L2.2 7.6L2.8 8V9.4Q2.8 10.6 4 10.6M6.5 4.5Q7.7 4.5 7.7 6V7.2L8.3 7.6L7.7 8V9.4Q7.7 10.6 6.5 10.6" fill="none" stroke="#c9c06a" stroke-width="0.9"/></svg>
<div class="t" style="left:269px;top:474px">tsconfig.json</div>
<div class="t" style="left:510px;top:474px;color:#d6d6d6;letter-spacing:-0.2px">1/15/2025 10:27 AM</div>
<svg class="a" style="left:251px;top:493px" width="12" height="16" viewBox="0 0 12 16"><path d="M0 0H8L12 4V16H0Z" fill="#d0d0d0"/><path d="M1 1H7.5L11 4.5V15H1Z" fill="#f7f7f7"/><path d="M8 0V4H12" fill="#e4e4e4" stroke="#c8c8c8" stroke-width="0.8"/><circle cx="5.5" cy="8.8" r="3.2" fill="#1e1e1e" stroke="#e5603a" stroke-width="1.2"/><path d="M8.7 8.8A3.2 3.2 0 0 1 5.5 12" stroke="#9b3ccf" stroke-width="1.2" fill="none"/><path d="M4.6 7.2L7 8.8L4.6 10.4Z" fill="#fff"/></svg>
<div class="t" style="left:269px;top:495px">vite.config.ts</div>
<div class="t" style="left:510px;top:495px;color:#d6d6d6;letter-spacing:-0.2px">1/27/2025 10:03 AM</div>
<svg class="a" style="left:251px;top:515px" width="11" height="14" viewBox="0 0 11 14"><path d="M0 0H7L11 4V14H0Z" fill="#d0d0d0"/><path d="M1 1H6.5L10 4.5V13H1Z" fill="#f7f7f7"/><path d="M7 0V4H11" fill="#e4e4e4" stroke="#c8c8c8" stroke-width="0.8"/><text x="5.3" y="10.3" font-family="Liberation Sans" font-weight="bold" font-size="6.5" fill="#b3aa3c" text-anchor="middle" letter-spacing="-0.3">JS</text></svg>
<div class="t" style="left:269px;top:516px;letter-spacing:-0.12px">vite.config.ts.timestamp-1736922610000-...</div>
<div class="t" style="left:510px;top:516px;color:#d6d6d6;letter-spacing:-0.2px">1/15/2025 12:30 PM</div>
<svg class="a" style="left:251px;top:536px" width="11" height="14" viewBox="0 0 11 14"><path d="M0 0H7L11 4V14H0Z" fill="#d0d0d0"/><path d="M1 1H6.5L10 4.5V13H1Z" fill="#f7f7f7"/><path d="M7 0V4H11" fill="#e4e4e4" stroke="#c8c8c8" stroke-width="0.8"/><text x="5.3" y="10.3" font-family="Liberation Sans" font-weight="bold" font-size="6.5" fill="#b3aa3c" text-anchor="middle" letter-spacing="-0.3">JS</text></svg>
<div class="t" style="left:269px;top:537px;letter-spacing:-0.12px">vite.config.ts.timestamp-1737609027378-...</div>
<div class="t" style="left:510px;top:537px;color:#d6d6d6;letter-spacing:-0.2px">1/23/2025 11:10 AM</div>
<svg class="a" style="left:251px;top:556px" width="12" height="16" viewBox="0 0 12 16"><path d="M0 0H8L12 4V16H0Z" fill="#d0d0d0"/><path d="M1 1H7.5L11 4.5V15H1Z" fill="#f7f7f7"/><path d="M8 0V4H12" fill="#e4e4e4" stroke="#c8c8c8" stroke-width="0.8"/></svg>
<div class="t" style="left:269px;top:558px">yarn.lock</div>
<div class="t" style="left:510px;top:558px;color:#d6d6d6;letter-spacing:-0.2px">1/24/2025 10:45 AM</div>
<svg class="a" style="left:251px;top:577px" width="12" height="16" viewBox="0 0 12 16"><path d="M0 0H8L12 4V16H0Z" fill="#d0d0d0"/><path d="M1 1H7.5L11 4.5V15H1Z" fill="#f7f7f7"/><path d="M8 0V4H12" fill="#e4e4e4" stroke="#c8c8c8" stroke-width="0.8"/><rect x="2" y="4" width="8" height="1" fill="#9a9a9a"/><rect x="2" y="6" width="8" height="1" fill="#9a9a9a"/><rect x="2" y="8" width="8" height="1" fill="#9a9a9a"/><rect x="2" y="10" width="8" height="1" fill="#9a9a9a"/><rect x="2" y="12" width="8" height="1" fill="#9a9a9a"/></svg>
<div class="t" style="left:269px;top:579px">yarn-error.log</div>
<div class="t" style="left:510px;top:579px;color:#d6d6d6;letter-spacing:-0.2px">1/15/2025 10:27 AM</div>

<div id="cmd" class="a">
<div id="cmdtitle" class="a">
<svg class="a" style="left:8px;top:8px" width="17" height="14" viewBox="0 0 17 14"><rect x="0" y="0" width="16" height="14" fill="#8c8c8c"/><rect x="1" y="1" width="14" height="2" fill="#c9c9c9"/><rect x="10" y="1" width="1" height="1" fill="#4a6ab0"/><rect x="12" y="1" width="1" height="1" fill="#4a6ab0"/><rect x="14" y="1" width="1" height="1" fill="#4a6ab0"/><rect x="1" y="3" width="14" height="10" fill="#000"/><path d="M5.5 5.3H3.6V10.2H5.5" stroke="#fff" stroke-width="1.3" fill="none"/><rect x="6.6" y="6" width="1.2" height="1.2" fill="#fff"/><rect x="6.6" y="9" width="1.2" height="1.2" fill="#fff"/><path d="M8.8 5L10.5 10" stroke="#fff" stroke-width="1.2"/><rect x="11" y="9.5" width="3" height="1.1" fill="#fff"/></svg>
<div class="t" style="left:29px;top:8px;letter-spacing:0.17px">C:\WINDOWS\system32\cmd.exe - "node"&nbsp; "C:\Users\Appstick\AppData\Roaming\npm\\node_modules\yarn\bin\yarn.js" dev</div>
<div class="a" style="left:858px;top:14px;width:10px;height:1px;background:#fff"></div>
<div class="a" style="left:903px;top:9px;width:10px;height:10px;border:1px solid #fff"></div>
<svg class="a" style="left:948px;top:8px" width="12" height="12" viewBox="0 0 12 12"><path d="M1 1L11 11M11 1L1 11" stroke="#fff" stroke-width="1.1"/></svg>
</div>
<div class="con" style="top:32px">11:55:12 AM <span class="c">[vite]</span><span class="g"> .env changed, restarting server...</span></div>
<div class="con" style="top:48px">11:55:12 AM <span class="c">[vite]</span> server restarted.</div>
<div class="con" style="top:80px">D:\New folder\Petshop\Source Code\petstick&gt;yarn dev</div>
<div class="con" style="top:96px">yarn run v1.22.19</div>
<div class="con" style="top:112px">$ nodemon server/app.ts</div>
<div class="con" style="top:128px"><span class="y">[nodemon] 3.1.7</span></div>
<div class="con" style="top:144px"><span class="y">[nodemon] to restart at any time, enter `rs`</span></div>
<div class="con" style="top:160px"><span class="y">[nodemon] watching path(s): server\**\*</span></div>
<div class="con" style="top:176px"><span class="y">[nodemon] watching extensions: ts</span></div>
<div class="con" style="top:192px"><span class="g">[nodemon] starting `ts-node -P server/tsconfig.dev.json server/app.ts`</span></div>
<div class="con" style="top:208px"><span class="y">The CJS build of Vite's Node API is deprecated. See https://vite.dev/guide/troubleshooting.html#vite-cjs-node-api-deprec</span></div>
<div class="con" style="top:224px"><span class="y">ated for more details.</span></div>
<div class="con" style="top:240px">App listening on port http://localhost:5000</div>
<div class="con" style="top:256px">MongoDB Connected Successfully.</div>
<div class="a" style="left:0px;top:282px;width:8px;height:4px;background:#f0f0f0"></div>
<div class="a" style="left:-2px;top:250px;width:256px;height:27px;border:2px solid #a8171d"></div>
<div class="a" style="left:960px;top:30px;width:17px;height:480px;background:#171717"></div>
<svg class="a" style="left:964px;top:36px" width="9" height="6" viewBox="0 0 9 6"><path d="M1 5L4.5 1.5L8 5" stroke="#6a6a6a" stroke-width="1.5" fill="none"/></svg>
<div class="a" style="left:961px;top:66px;width:15px;height:18px;background:#4d4d4d"></div>
<svg class="a" style="left:964px;top:499px" width="9" height="7" viewBox="0 0 9 7"><path d="M0.5 0.5L4.5 3.5L8.5 0.5V3L4.5 6.5L0.5 3Z" fill="#8a8a8a"/></svg>
</div>
</body></html>
